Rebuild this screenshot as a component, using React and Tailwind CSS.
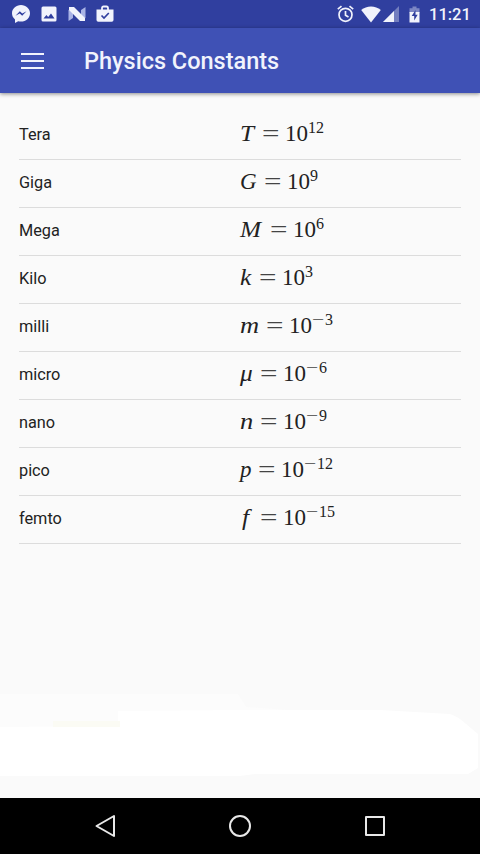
// App.jsx
import React from 'react';

const constants = [
  { name: 'Tera', symbol: 'T', width: 'w-[22px]', size: 'scale-x-110', power: '12' },
  { name: 'Giga', symbol: 'G', width: 'w-[24px]', size: 'scale-x-100', power: '9' },
  { name: 'Mega', symbol: 'M', width: 'w-[30px]', size: 'scale-x-110', power: '6' },
  { name: 'Kilo', symbol: 'k', width: 'w-[19px]', size: 'scale-x-110', power: '3' },
  { name: 'milli', symbol: 'm', width: 'w-[26px]', size: 'scale-x-115', power: '3', negative: true },
  { name: 'micro', symbol: 'μ', width: 'w-[20px]', size: 'scale-x-110', power: '6', negative: true },
  { name: 'nano', symbol: 'n', width: 'w-[20px]', size: 'scale-x-115', power: '9', negative: true },
  { name: 'pico', symbol: 'p', width: 'w-[18px]', size: 'scale-x-100', power: '12', negative: true },
  { name: 'femto', symbol: 'f', width: 'w-[20px] pl-[2px]', size: 'scale-x-110', power: '15', negative: true },
];

const StatusBar = () => (
  <div className="h-[28px] shrink-0 bg-[#303f9f] flex items-center justify-between pl-[11px] pr-[10px] text-[#f1f3fc]">
    <div className="flex items-center">
      <svg className="w-5 h-5" viewBox="0 0 20 20" fill="currentColor">
        <path d="M10 1C5 1 1 4.700 1 9.300c0 2.500 1.100 4.600 3 6.100V19l3.200-1.800c.9.250 1.800.4 2.800.4 5 0 9-3.700 9-8.300S15 1 10 1z" />
        <path d="M4.500 11.700l4.300-4.500 2.500 2.300 4.200-2.300-4.300 4.600-2.500-2.400z" fill="#303f9f" />
      </svg>
      <svg className="w-4 h-4 ml-[10px]" viewBox="0 0 16 16" fill="currentColor">
        <path fillRule="evenodd" d="M2 .5h12A1.500 1.500 0 0 1 15.500 2v12a1.500 1.500 0 0 1-1.500 1.500H2A1.500 1.500 0 0 1 .5 14V2A1.500 1.500 0 0 1 2 .5zM2.500 12.500h11L10 7.500l-2.800 3.400-1.800-2z" />
      </svg>
      <svg className="w-[18px] h-4 ml-[11px]" viewBox="0 0 18 16">
        <path d="M.5 4L5 1v11L.5 15zM13 4l4.500-3v11L13 15z" fill="#a9b3e6" />
        <path d="M1 1h5l11 11v3h-5L1 4z" fill="#f1f3fc" />
      </svg>
      <svg className="w-[18px] h-[18px] ml-[10px]" viewBox="0 0 18 18">
        <path d="M6 5V3.200C6 2 6.700 1.500 7.500 1.500h3c.8 0 1.500.5 1.500 1.700V5" fill="none" stroke="currentColor" strokeWidth="1.800" />
        <path d="M.5 4.500h17V15a1.800 1.800 0 0 1-1.800 1.800H2.300A1.800 1.800 0 0 1 .5 15z" fill="currentColor" />
        <path d="M5.500 10.500l2.500 2.500 4.800-5" fill="none" stroke="#303f9f" strokeWidth="1.700" />
      </svg>
    </div>
    <div className="flex items-center">
      <svg className="w-[17px] h-[18px]" viewBox="0 0 17 18" fill="none" stroke="currentColor" strokeWidth="1.700">
        <circle cx="8.500" cy="9.800" r="6.500" />
        <path d="M.8 4.200L4.500 1.200M16.200 4.200l-3.700-3M8.500 6v4.200l3 1.800" />
      </svg>
      <svg className="w-5 h-[17px] ml-[7px]" viewBox="0 0 20 17" fill="currentColor">
        <path d="M10 16.500L.2 4C2.900 1.700 6.300.5 10 .5s7.100 1.200 9.800 3.500z" />
      </svg>
      <svg className="w-4 h-4 ml-[2px]" viewBox="0 0 16 16" fill="currentColor">
        <path d="M16 0v16H0z" opacity=".35" />
        <path d="M11 5v11H0z" />
      </svg>
      <svg className="w-[11px] h-[17px] ml-[10px]" viewBox="0 0 11 17" fill="currentColor">
        <path d="M3.500.5h4v1.700h3V7H.5V2.200h3z" opacity=".4" />
        <path d="M.5 6h10v10.500H.5z" />
        <path d="M6.500 4L2.700 10h2.500v4.500L8.700 8.700H6.500z" fill="#303f9f" />
      </svg>
      <span className="ml-[9px] w-[41px] text-[16.500px] leading-none font-medium whitespace-nowrap mt-[3px]">11:21</span>
    </div>
  </div>
);

const AppBar = () => (
  <div className="h-[65px] shrink-0 bg-[#3f51b5] flex items-center pl-[21px] text-[#f1f3fc] shadow-[0_1px_4px_rgba(0,0,0,0.45)] relative">
    <button className="w-[23px] flex flex-col gap-[5px]">
      <span className="h-[2px] w-full bg-current" />
      <span className="h-[2px] w-full bg-current" />
      <span className="h-[2px] w-full bg-current" />
    </button>
    <h1 className="ml-10 mt-[3px] text-[23.500px] leading-none font-medium whitespace-nowrap">Physics Constants</h1>
  </div>
);

const Formula = ({ item }) => (
  <div className="flex items-baseline h-7 text-[23px] leading-7 text-[#222] font-['Liberation_Serif',serif]">
    <span className={`${item.width} shrink-0 italic`}>
      <span className={`${item.size} inline-block origin-left`}>{item.symbol}</span>
    </span>
    <span className="w-[23px] shrink-0">
      <span className="inline-block origin-left scale-x-[1.350] text-[#444]">=</span>
    </span>
    <span>10</span>
    <span className="flex text-[16px] leading-4 relative -top-2">
      {item.negative && (
        <span className="w-[13px]">
          <span className="inline-block origin-left scale-x-[1.350] text-[#444]">−</span>
        </span>
      )}
      <span>{item.power}</span>
    </span>
  </div>
);

const NavBar = () => (
  <div className="h-14 shrink-0 bg-black flex items-center justify-around px-[37px]">
    {/* back, home, recents */}
    <svg className="w-6 h-6" viewBox="0 0 24 24" fill="none" stroke="#e8e8e8" strokeWidth="2" strokeLinejoin="round">
      <path d="M21 2v20L3.500 12z" />
    </svg>
    <svg className="w-6 h-6" viewBox="0 0 24 24" fill="none" stroke="#e8e8e8" strokeWidth="2">
      <circle cx="12" cy="12" r="10" />
    </svg>
    <svg className="w-6 h-6" viewBox="0 0 24 24" fill="none" stroke="#e8e8e8" strokeWidth="2" strokeLinejoin="round">
      <path d="M3 3h18v18H3z" />
    </svg>
  </div>
);

const App = () => {
  return (
    <div className="w-[480px] h-[854px] flex flex-col overflow-hidden bg-[#fafafa] font-[Roboto,sans-serif]">
      <StatusBar />
      <AppBar />
      <div className="flex-1 relative pt-[19px] px-[19px]">
        {/* pale patch at the foot of the list */}
        <svg className="absolute left-0 bottom-0 w-full h-[118px]" viewBox="0 0 480 118">
          <path d="M0 14H238L246 27 300 31 0 50z" fill="#fcfcfc" />
          <path d="M0 47L118 46V31L245 30H380L450 34C460 37 468 46 478 54V88L468 94 255 94 240 96H0z" fill="#fff" />
          <path d="M53 41h67v6H53z" fill="#fbfbf4" />
        </svg>
        <div className="relative">
          {constants.map(item => (
            <div key={item.name} className="h-12 grid grid-cols-2 border-b border-[#dcdcdc]">
              <div className="pt-[13px] text-[16.300px] leading-5 text-[#222]">{item.name}</div>
              <div className="pt-2">
                <Formula item={item} />
              </div>
            </div>
          ))}
        </div>
      </div>
      <NavBar />
    </div>
  );
};

export default App;
